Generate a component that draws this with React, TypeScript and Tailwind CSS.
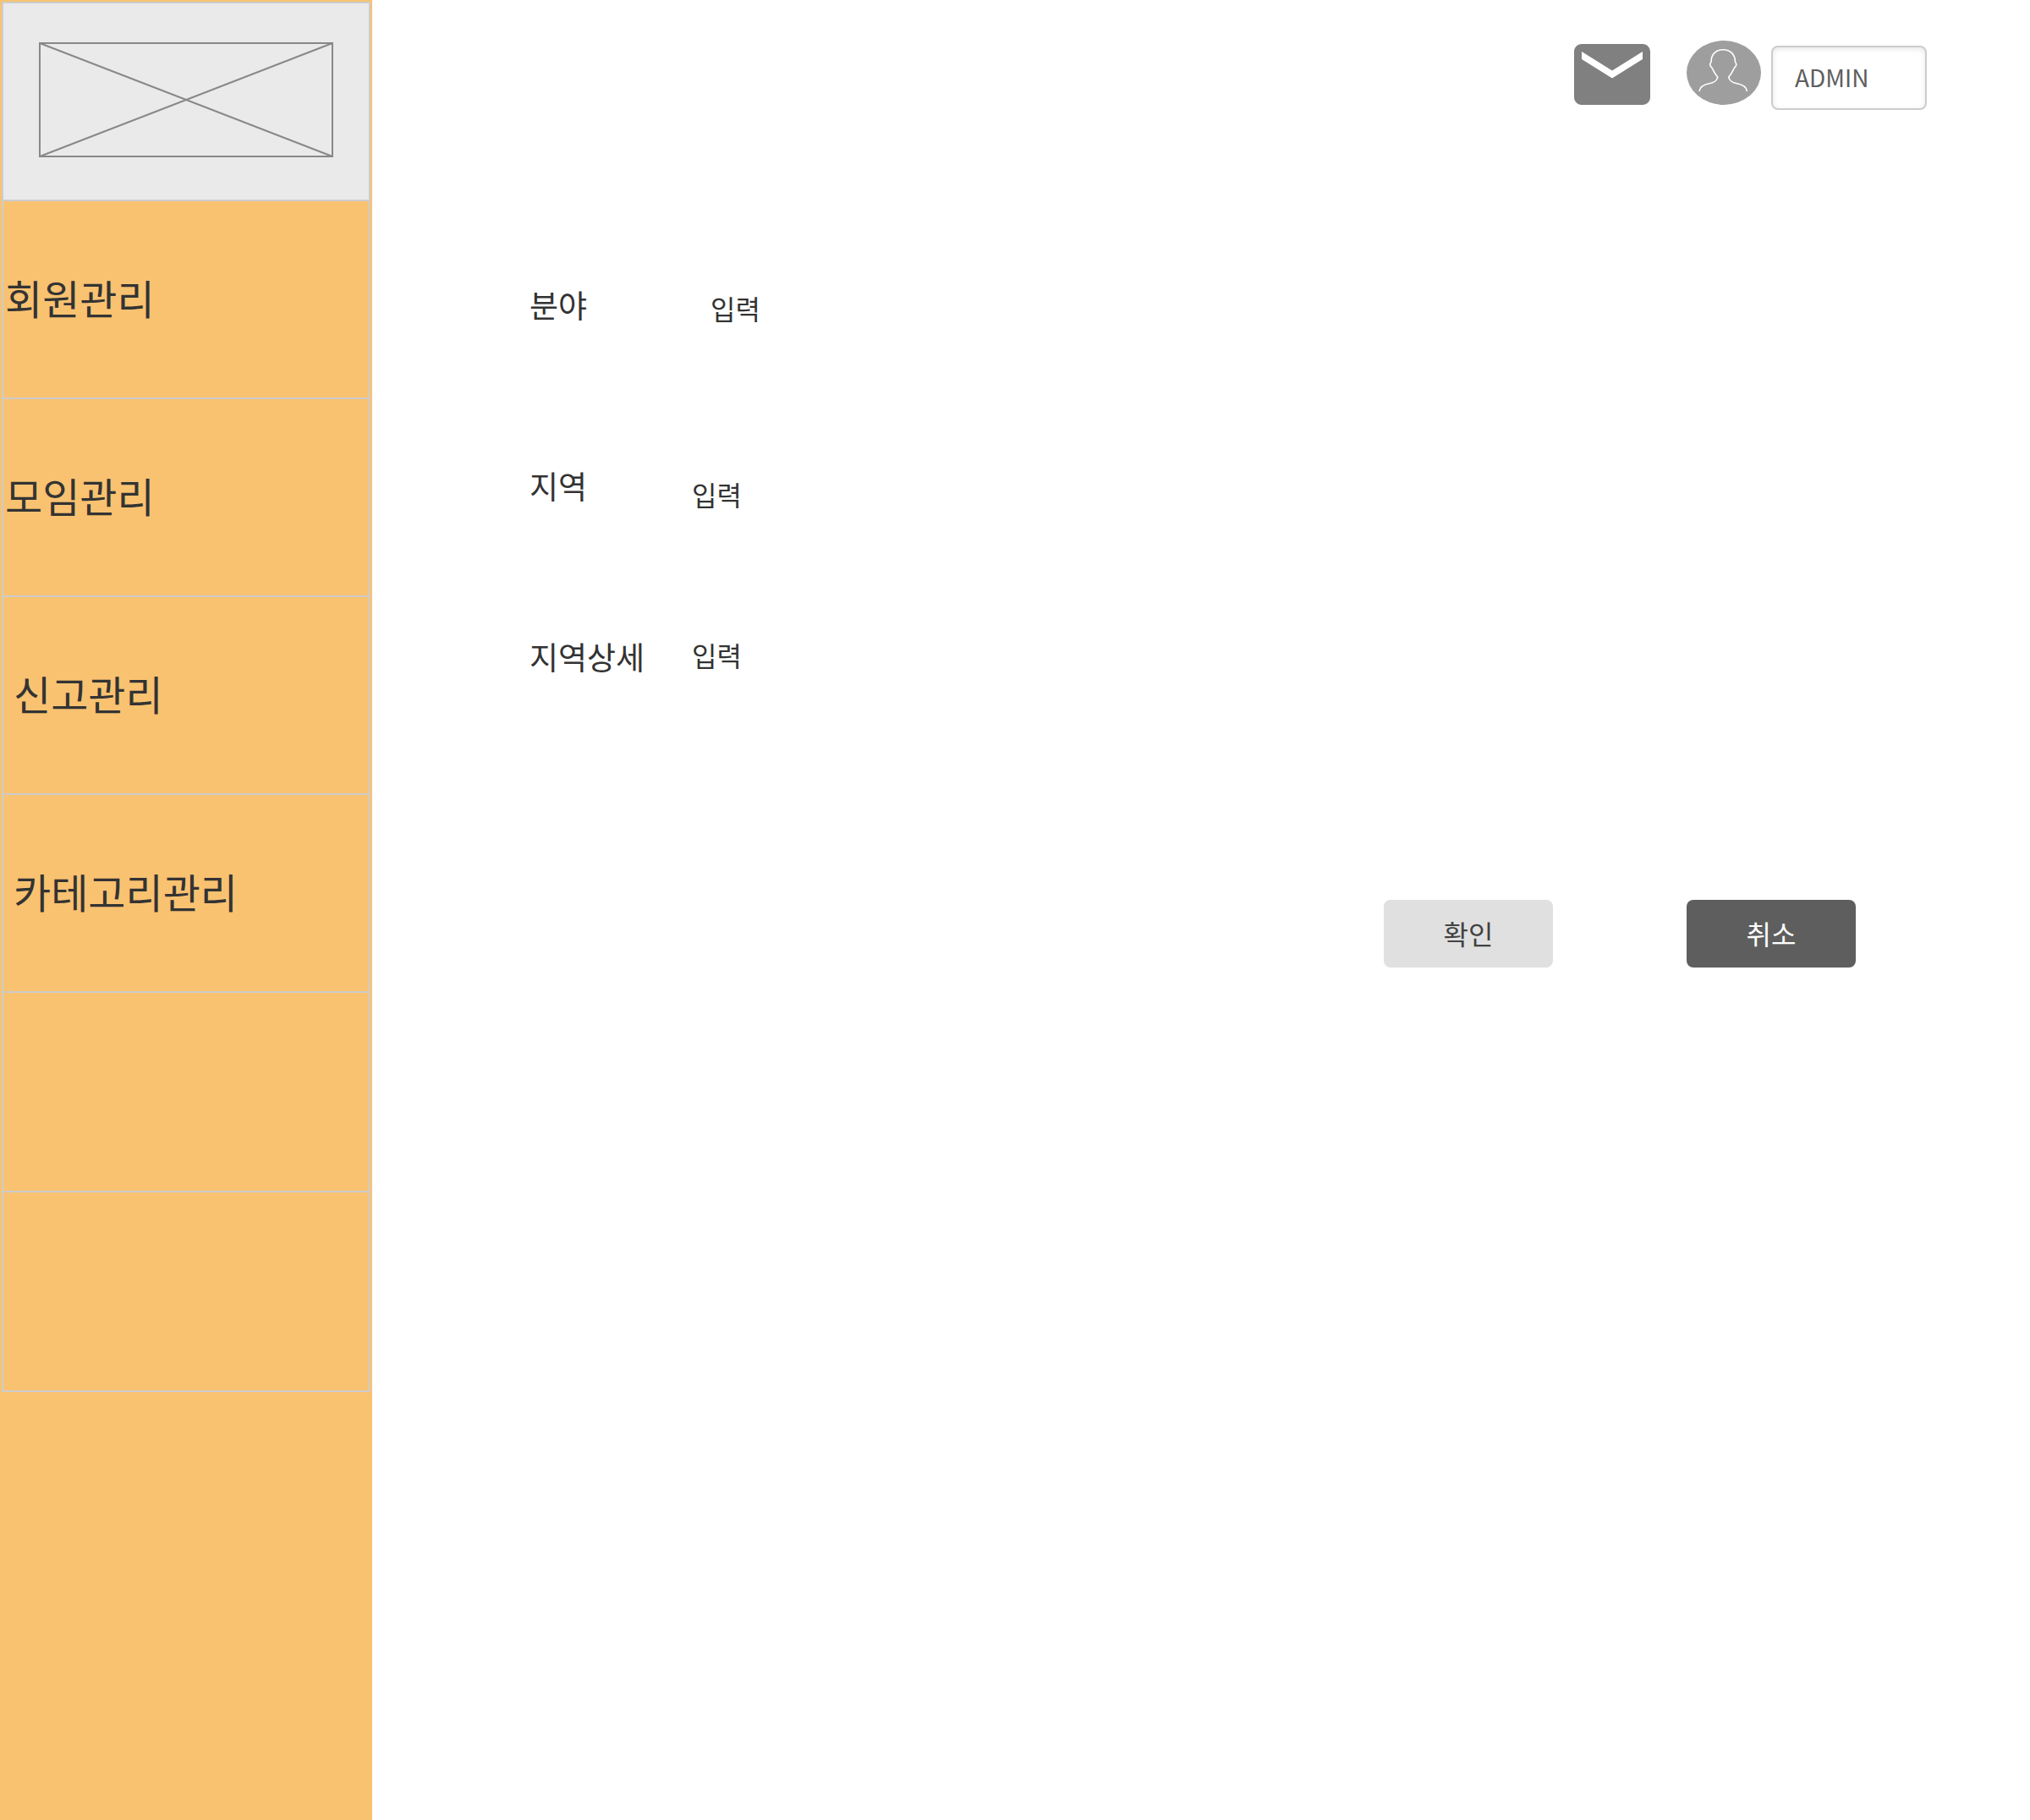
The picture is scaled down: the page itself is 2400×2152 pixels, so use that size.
const menu = [
  { label: '회원관리', className: 'pl-0.5' },
  { label: '모임관리', className: 'pl-0.5' },
  { label: '신고관리', className: 'pl-3' },
  { label: '카테고리관리', className: 'pl-3' },
];

const fields = [
  { id: 'field', label: '분야', row: 'pt-[334px]', labelBox: 'w-[214px]', input: 'mt-1.5' },
  { id: 'region', label: '지역', row: 'pt-[160px]', labelBox: 'w-[192px]', input: 'mt-3' },
  { id: 'region-detail', label: '지역상세', row: 'pt-[142px]', labelBox: 'w-[192px]', input: '' },
];

function MailIcon() {
  return (
    <svg viewBox="2 4 20 16" className="h-[72px] w-[90px]" fill="#808080" aria-hidden="true">
      <path d="M20 4H4c-1.1 0-2 .9-2 2v12c0 1.1.9 2 2 2h16c1.1 0 2-.9 2-2V6c0-1.1-.9-2-2-2zm0 4l-8 5-8-5V6l8 5 8-5v2z" />
    </svg>
  );
}

function AvatarIcon() {
  return (
    <svg viewBox="0 0 88 76" className="h-[76px] w-[88px]" aria-hidden="true">
      <ellipse cx="44" cy="38" rx="44" ry="38" fill="#9e9e9e" />
      <path
        d="M15 60C15.500 54.500 21 52 27 50.800C32 50.200 36 47 36.800 43C33.500 40 31.500 35 29.800 31.800C27.500 30.500 27 27.500 29 25.500C29 16 34.500 10.800 43 10.800C51.500 10.800 57.500 16 57.500 25.500C59.500 27.500 59 30.500 56.700 31.800C55 35 53 40 49.700 43C50.500 47 54.500 50.200 59.500 50.800C65.500 52 71 54.500 71.500 60"
        fill="none"
        stroke="#fff"
        strokeWidth="1.600"
      />
    </svg>
  );
}

export default function App() {
  return (
    <div className="flex min-h-screen bg-white font-['Noto_Sans_CJK_KR',sans-serif] text-[#333]">
      <aside className="w-[440px] shrink-0 bg-[#f9c271] p-0.5">
        <nav className="border-2 border-b-0 border-[#ccc]">
          <a href="#" aria-label="Home" className="flex h-[234px] items-start justify-center border-b-2 border-[#ccc] bg-[#eaeaea] pt-[46px]">
            <svg viewBox="0 0 348 136" className="h-[136px] w-[348px]" fill="none" stroke="#888" strokeWidth="2" aria-hidden="true">
              <path d="M1 1H347V135H1ZM1 1L347 135M347 1L1 135" />
            </svg>
          </a>
          {menu.map((item) => (
            <a key={item.label} href="#" className={`flex h-[234px] items-center border-b-2 border-[#ccc] pb-1.5 text-5xl ${item.className}`}>
              {item.label}
            </a>
          ))}
          <div className="h-[236px] border-b-2 border-[#ccc]" />
          <div className="h-[236px] border-b-2 border-[#ccc]" />
        </nav>
      </aside>

      <div className="relative min-w-0 flex-1">
        <header className="absolute top-0 right-0 flex items-start pt-12 pr-[122px]">
          <button type="button" aria-label="Mail" className="mt-1 mr-[43px]">
            <MailIcon />
          </button>
          <button type="button" aria-label="Profile" className="mr-3">
            <AvatarIcon />
          </button>
          <input
            aria-label="User name"
            defaultValue="ADMIN"
            className="mt-1.5 h-[76px] w-[184px] rounded-lg border-2 border-[#ccc] bg-white px-[26px] pb-0.5 text-[28px] text-[#5e5e5e] shadow-[inset_0_2px_6px_rgba(0,0,0,0.1)]"
          />
        </header>

        <main>
          <form className="pl-[186px]">
            {fields.map((field) => (
              <div key={field.id} className={`flex items-start ${field.row}`}>
                <label htmlFor={field.id} className={`shrink-0 text-[37px] leading-[52px] ${field.labelBox}`}>
                  {field.label}
                </label>
                <input id={field.id} defaultValue="입력" className={`h-12 w-full max-w-xl bg-transparent text-[32px] ${field.input}`} />
              </div>
            ))}
            <div className="flex justify-end gap-[158px] pt-[262px] pr-[206px]">
              <button type="button" className="h-20 w-[200px] rounded-lg bg-[#e0e0e0] pb-0.5 text-[32px] text-[#424242]">
                확인
              </button>
              <button type="button" className="h-20 w-[200px] rounded-lg bg-[#5e5e5e] pb-0.5 text-[32px] text-white">
                취소
              </button>
            </div>
          </form>
        </main>
      </div>
    </div>
  );
}
